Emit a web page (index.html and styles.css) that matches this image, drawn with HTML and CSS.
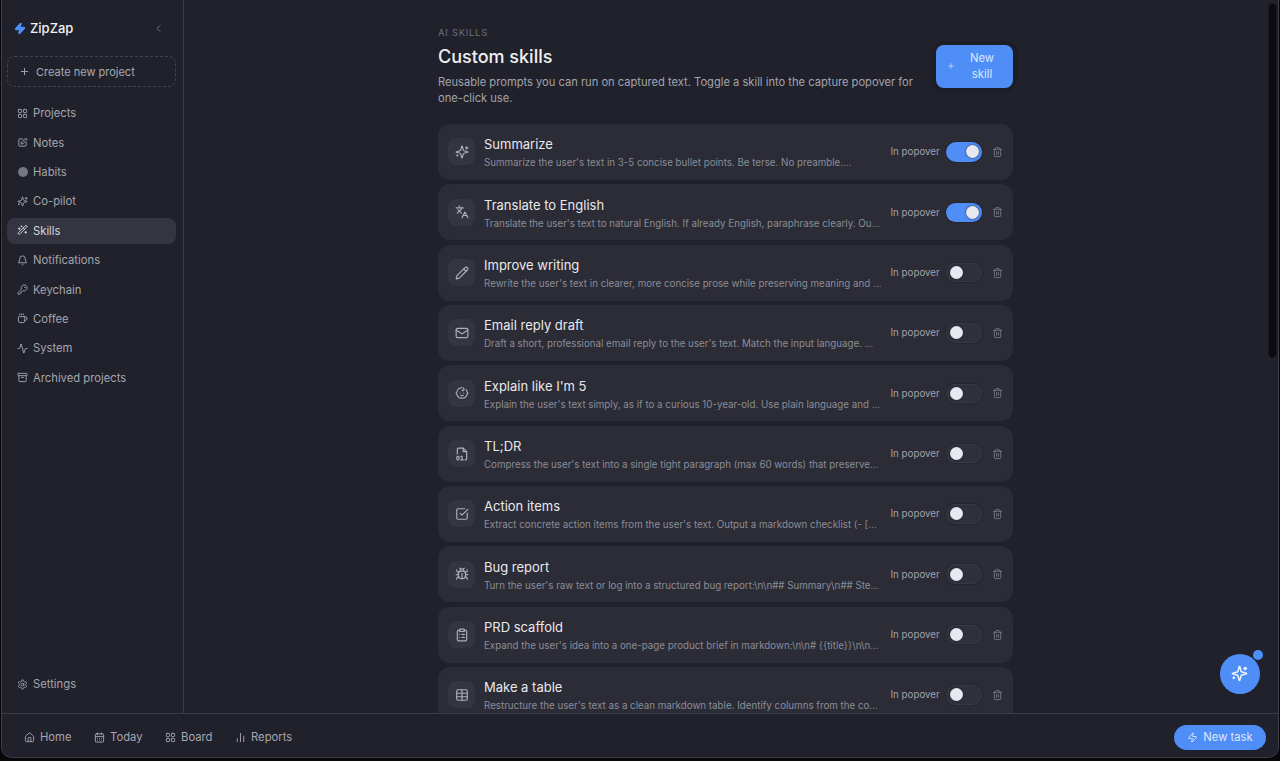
FILE: index.html
```html
<!DOCTYPE html>
<html lang="en">
<head>
  <meta charset="UTF-8" />
  <meta name="viewport" content="width=device-width, initial-scale=1.0" />
  <title>ZipZap - Skills</title>
  <link rel="stylesheet" href="styles.css">
</head>
<body>
  <svg class="sprite" width="0" height="0">
    <defs>
      <symbol id="i-grid" viewBox="0 0 24 24"><rect x="3" y="3" width="7" height="7" rx="1.5"/><rect x="14" y="3" width="7" height="7" rx="1.5"/><rect x="3" y="14" width="7" height="7" rx="1.5"/><rect x="14" y="14" width="7" height="7" rx="1.5"/></symbol>
      <symbol id="i-notes" viewBox="0 0 24 24"><path d="M12 4H6a2 2 0 0 0-2 2v12a2 2 0 0 0 2 2h12a2 2 0 0 0 2-2v-6"/><path d="M18.4 3.6a2 2 0 0 1 2.8 2.8L13 14.5l-4 1 1-4z"/></symbol>
      <symbol id="i-sparkles" viewBox="0 0 24 24"><path d="M9.9 15.5a2 2 0 0 0-1.4-1.4l-6.1-1.6a.5.5 0 0 1 0-1l6.1-1.6a2 2 0 0 0 1.4-1.4l1.6-6.1a.5.5 0 0 1 1 0l1.6 6.1a2 2 0 0 0 1.4 1.4l6.1 1.6a.5.5 0 0 1 0 1l-6.1 1.6a2 2 0 0 0-1.4 1.4l-1.6 6.1a.5.5 0 0 1-1 0z"/><path d="M20 3v4"/><path d="M22 5h-4"/><path d="M4 17v2"/><path d="M5 18H3"/></symbol>
      <symbol id="i-wand" viewBox="0 0 24 24"><path d="m21.6 2.4-1.2-1.2a1.2 1.2 0 0 0-1.7 0L2.4 17.4a1.2 1.2 0 0 0 0 1.7l1.2 1.2a1.2 1.2 0 0 0 1.7 0L21.6 4.1a1.2 1.2 0 0 0 0-1.7"/><path d="m14 7 3 3"/><path d="M5 6v4"/><path d="M19 14v4"/><path d="M10 2v2"/><path d="M7 8H3"/><path d="M21 16h-4"/><path d="M11 3H9"/></symbol>
      <symbol id="i-bell" viewBox="0 0 24 24"><path d="M10.3 21a2 2 0 0 0 3.4 0"/><path d="M3.3 15.3A1 1 0 0 0 4 17h16a1 1 0 0 0 .7-1.7C19.4 14 18 12.6 18 8A6 6 0 0 0 6 8c0 4.6-1.4 6-2.7 7.3"/></symbol>
      <symbol id="i-key" viewBox="0 0 24 24"><path d="M2.6 18.4A2 2 0 0 0 2 19.8V21a1 1 0 0 0 1 1h3a1 1 0 0 0 1-1v-1a1 1 0 0 1 1-1h1a1 1 0 0 0 1-1v-1a1 1 0 0 1 1-1h.2a2 2 0 0 0 1.4-.6l.8-.8a6.5 6.5 0 1 0-4-4z"/><circle cx="16.5" cy="7.5" r=".5"/></symbol>
      <symbol id="i-coffee" viewBox="0 0 24 24"><path d="M10 2v2"/><path d="M14 2v2"/><path d="M6 2v2"/><path d="M16 8a1 1 0 0 1 1 1v8a4 4 0 0 1-4 4H7a4 4 0 0 1-4-4V9a1 1 0 0 1 1-1h14a4 4 0 1 1 0 8h-1"/></symbol>
      <symbol id="i-activity" viewBox="0 0 24 24"><path d="M22 12h-2.5a2 2 0 0 0-1.9 1.5l-2.4 8.3a.25.25 0 0 1-.5 0L9.2 2.2a.25.25 0 0 0-.5 0l-2.3 8.3A2 2 0 0 1 4.5 12H2"/></symbol>
      <symbol id="i-archive" viewBox="0 0 24 24"><rect x="2" y="3" width="20" height="5" rx="1"/><path d="M4 8v11a2 2 0 0 0 2 2h12a2 2 0 0 0 2-2V8"/><path d="M10 12h4"/></symbol>
      <symbol id="i-gear" viewBox="0 0 24 24"><path d="M12.2 2h-.4a2 2 0 0 0-2 2v.2a2 2 0 0 1-1 1.7l-.4.3a2 2 0 0 1-2 0l-.2-.1a2 2 0 0 0-2.7.7l-.2.4a2 2 0 0 0 .7 2.7l.2.1a2 2 0 0 1 1 1.7v.5a2 2 0 0 1-1 1.8l-.2.1a2 2 0 0 0-.7 2.7l.2.4a2 2 0 0 0 2.7.7l.2-.1a2 2 0 0 1 2 0l.4.3a2 2 0 0 1 1 1.7v.2a2 2 0 0 0 2 2h.4a2 2 0 0 0 2-2v-.2a2 2 0 0 1 1-1.7l.4-.3a2 2 0 0 1 2 0l.2.1a2 2 0 0 0 2.7-.7l.2-.4a2 2 0 0 0-.7-2.7l-.2-.1a2 2 0 0 1-1-1.8v-.5a2 2 0 0 1 1-1.7l.2-.1a2 2 0 0 0 .7-2.7l-.2-.4a2 2 0 0 0-2.7-.7l-.2.1a2 2 0 0 1-2 0l-.4-.3a2 2 0 0 1-1-1.7V4a2 2 0 0 0-2-2"/><circle cx="12" cy="12" r="3"/></symbol>
      <symbol id="i-plus" viewBox="0 0 24 24"><path d="M5 12h14"/><path d="M12 5v14"/></symbol>
      <symbol id="i-chevron" viewBox="0 0 24 24"><path d="m15 18-6-6 6-6"/></symbol>
      <symbol id="i-trash" viewBox="0 0 24 24"><path d="M19 6v14a2 2 0 0 1-2 2H7a2 2 0 0 1-2-2V6"/><path d="M3 6h18"/><path d="M8 6V4a2 2 0 0 1 2-2h4a2 2 0 0 1 2 2v2"/><path d="M10 11v6"/><path d="M14 11v6"/></symbol>
      <symbol id="i-languages" viewBox="0 0 24 24"><path d="m5 8 6 6"/><path d="m4 14 6-6 2-3"/><path d="M2 5h12"/><path d="M7 2h1"/><path d="m22 22-5-10-5 10"/><path d="M14 18h6"/></symbol>
      <symbol id="i-pencil" viewBox="0 0 24 24"><path d="M21.2 6.8a2.8 2.8 0 0 0-4-4L3.8 16.2a2 2 0 0 0-.5.8l-1.3 4.4a.5.5 0 0 0 .6.6l4.4-1.3a2 2 0 0 0 .8-.5z"/><path d="m15 5 4 4"/></symbol>
      <symbol id="i-mail" viewBox="0 0 24 24"><rect x="2" y="4" width="20" height="16" rx="2"/><path d="m22 7-8.97 5.7a1.94 1.94 0 0 1-2.06 0L2 7"/></symbol>
      <symbol id="i-baby" viewBox="0 0 24 24"><path d="M9 12h.01"/><path d="M15 12h.01"/><path d="M10 16c.5.3 1.2.5 2 .5s1.5-.2 2-.5"/><path d="M19 6.3a9 9 0 0 1 1.8 3.9 2 2 0 0 1 0 3.6 9 9 0 0 1-17.6 0 2 2 0 0 1 0-3.6A9 9 0 0 1 12 3c2 0 3.5 1.1 3.5 2.5s-.9 2.5-2 2.5c-.8 0-1.5-.4-1.5-1"/></symbol>
      <symbol id="i-file" viewBox="0 0 24 24"><path d="M4 12V4a2 2 0 0 1 2-2h8l6 6v12a2 2 0 0 1-2 2h-1"/><path d="M14 2v6h6"/><path d="M10 16h2v6"/><path d="M10 22h4"/><rect x="3" y="16" width="4" height="6" rx="2"/></symbol>
      <symbol id="i-check" viewBox="0 0 24 24"><path d="M21 10.5V19a2 2 0 0 1-2 2H5a2 2 0 0 1-2-2V5a2 2 0 0 1 2-2h12"/><path d="m9 11 3 3L22 4"/></symbol>
      <symbol id="i-bug" viewBox="0 0 24 24"><path d="M12 20v-9"/><path d="M14 7a4 4 0 0 1 4 4v3a6 6 0 0 1-12 0v-3a4 4 0 0 1 4-4z"/><path d="M14.1 3.9 16 2"/><path d="M9.9 3.9 8 2"/><path d="M9 7V6a3 3 0 0 1 6 0v1"/><path d="M21 21a4 4 0 0 0-3.8-4"/><path d="M21 5a4 4 0 0 1-3.6 4"/><path d="M22 13h-4"/><path d="M3 21a4 4 0 0 1 3.8-4"/><path d="M3 5a4 4 0 0 0 3.6 4"/><path d="M6 13H2"/></symbol>
      <symbol id="i-clipboard" viewBox="0 0 24 24"><rect x="8" y="2" width="8" height="4" rx="1"/><path d="M16 4h2a2 2 0 0 1 2 2v14a2 2 0 0 1-2 2H6a2 2 0 0 1-2-2V6a2 2 0 0 1 2-2h2"/><path d="M12 11h4"/><path d="M12 16h4"/><path d="M8 11h.01"/><path d="M8 16h.01"/></symbol>
      <symbol id="i-table" viewBox="0 0 24 24"><rect x="3" y="3" width="18" height="18" rx="2"/><path d="M12 3v18"/><path d="M3 9h18"/><path d="M3 15h18"/></symbol>
      <symbol id="i-home" viewBox="0 0 24 24"><path d="M15 21v-8a1 1 0 0 0-1-1h-4a1 1 0 0 0-1 1v8"/><path d="M3 10a2 2 0 0 1 .7-1.5l7-6a2 2 0 0 1 2.6 0l7 6A2 2 0 0 1 21 10v9a2 2 0 0 1-2 2H5a2 2 0 0 1-2-2z"/></symbol>
      <symbol id="i-calendar" viewBox="0 0 24 24"><path d="M8 2v4"/><path d="M16 2v4"/><rect x="3" y="4" width="18" height="18" rx="2"/><path d="M3 10h18"/><path d="M8 14h.01"/><path d="M12 14h.01"/><path d="M16 14h.01"/><path d="M8 18h.01"/><path d="M12 18h.01"/><path d="M16 18h.01"/></symbol>
      <symbol id="i-chart" viewBox="0 0 24 24"><path d="M5 21v-6"/><path d="M12 21V3"/><path d="M19 21V9"/></symbol>
      <symbol id="i-zap" viewBox="0 0 24 24"><path d="M4 14a1 1 0 0 1-.8-1.6l9.9-10.2a.5.5 0 0 1 .9.5l-1.9 6A1 1 0 0 0 13 10h7a1 1 0 0 1 .8 1.6l-9.9 10.2a.5.5 0 0 1-.9-.5l1.9-6A1 1 0 0 0 11 14z"/></symbol>
    </defs>
  </svg>

  <div class="window">
    <div class="top">
      <aside class="sidebar">
        <div class="brand">
          <svg class="brand-bolt" viewBox="0 0 24 24"><use href="#i-zap"/></svg>
          <span class="brand-name">ZipZap</span>
          <svg class="icon collapse"><use href="#i-chevron"/></svg>
        </div>
        <button class="create"><svg class="icon"><use href="#i-plus"/></svg>Create new project</button>
        <nav class="nav">
          <a class="nav-item"><svg class="icon"><use href="#i-grid"/></svg>Projects</a>
          <a class="nav-item"><svg class="icon"><use href="#i-notes"/></svg>Notes</a>
          <a class="nav-item"><span class="dot"></span>Habits</a>
          <a class="nav-item"><svg class="icon"><use href="#i-sparkles"/></svg>Co-pilot</a>
          <a class="nav-item active"><svg class="icon"><use href="#i-wand"/></svg>Skills</a>
          <a class="nav-item"><svg class="icon"><use href="#i-bell"/></svg>Notifications</a>
          <a class="nav-item"><svg class="icon"><use href="#i-key"/></svg>Keychain</a>
          <a class="nav-item"><svg class="icon"><use href="#i-coffee"/></svg>Coffee</a>
          <a class="nav-item"><svg class="icon"><use href="#i-activity"/></svg>System</a>
          <a class="nav-item"><svg class="icon"><use href="#i-archive"/></svg>Archived projects</a>
        </nav>
        <a class="nav-item settings"><svg class="icon"><use href="#i-gear"/></svg>Settings</a>
      </aside>

      <main class="main">
        <div class="content">
          <header class="head">
            <div class="head-text">
              <div class="eyebrow">AI SKILLS</div>
              <h1>Custom skills</h1>
              <p>Reusable prompts you can run on captured text. Toggle a skill into the capture popover for one-click use.</p>
            </div>
            <button class="new-skill"><svg class="icon"><use href="#i-plus"/></svg><span>New skill</span></button>
          </header>

          <div class="skills">
            <div class="skill">
              <div class="skill-icon"><svg class="icon"><use href="#i-sparkles"/></svg></div>
              <div class="skill-body"><div class="skill-name">Summarize</div><div class="skill-desc">Summarize the user's text in 3-5 concise bullet points. Be terse. No preamble.&hellip;</div></div>
              <span class="pop-label">In popover</span>
              <span class="toggle on"></span>
              <svg class="icon trash"><use href="#i-trash"/></svg>
            </div>
            <div class="skill">
              <div class="skill-icon"><svg class="icon"><use href="#i-languages"/></svg></div>
              <div class="skill-body"><div class="skill-name">Translate to English</div><div class="skill-desc">Translate the user's text to natural English. If already English, paraphrase clearly. Ou&hellip;</div></div>
              <span class="pop-label">In popover</span>
              <span class="toggle on"></span>
              <svg class="icon trash"><use href="#i-trash"/></svg>
            </div>
            <div class="skill">
              <div class="skill-icon"><svg class="icon"><use href="#i-pencil"/></svg></div>
              <div class="skill-body"><div class="skill-name">Improve writing</div><div class="skill-desc">Rewrite the user's text in clearer, more concise prose while preserving meaning and &hellip;</div></div>
              <span class="pop-label">In popover</span>
              <span class="toggle"></span>
              <svg class="icon trash"><use href="#i-trash"/></svg>
            </div>
            <div class="skill">
              <div class="skill-icon"><svg class="icon"><use href="#i-mail"/></svg></div>
              <div class="skill-body"><div class="skill-name">Email reply draft</div><div class="skill-desc">Draft a short, professional email reply to the user's text. Match the input language. &hellip;</div></div>
              <span class="pop-label">In popover</span>
              <span class="toggle"></span>
              <svg class="icon trash"><use href="#i-trash"/></svg>
            </div>
            <div class="skill">
              <div class="skill-icon"><svg class="icon"><use href="#i-baby"/></svg></div>
              <div class="skill-body"><div class="skill-name">Explain like I'm 5</div><div class="skill-desc">Explain the user's text simply, as if to a curious 10-year-old. Use plain language and &hellip;</div></div>
              <span class="pop-label">In popover</span>
              <span class="toggle"></span>
              <svg class="icon trash"><use href="#i-trash"/></svg>
            </div>
            <div class="skill">
              <div class="skill-icon"><svg class="icon"><use href="#i-file"/></svg></div>
              <div class="skill-body"><div class="skill-name">TL;DR</div><div class="skill-desc">Compress the user's text into a single tight paragraph (max 60 words) that preserve&hellip;</div></div>
              <span class="pop-label">In popover</span>
              <span class="toggle"></span>
              <svg class="icon trash"><use href="#i-trash"/></svg>
            </div>
            <div class="skill">
              <div class="skill-icon"><svg class="icon"><use href="#i-check"/></svg></div>
              <div class="skill-body"><div class="skill-name">Action items</div><div class="skill-desc">Extract concrete action items from the user's text. Output a markdown checklist (- [&hellip;</div></div>
              <span class="pop-label">In popover</span>
              <span class="toggle"></span>
              <svg class="icon trash"><use href="#i-trash"/></svg>
            </div>
            <div class="skill">
              <div class="skill-icon"><svg class="icon"><use href="#i-bug"/></svg></div>
              <div class="skill-body"><div class="skill-name">Bug report</div><div class="skill-desc">Turn the user's raw text or log into a structured bug report:\n\n## Summary\n## Ste&hellip;</div></div>
              <span class="pop-label">In popover</span>
              <span class="toggle"></span>
              <svg class="icon trash"><use href="#i-trash"/></svg>
            </div>
            <div class="skill">
              <div class="skill-icon"><svg class="icon"><use href="#i-clipboard"/></svg></div>
              <div class="skill-body"><div class="skill-name">PRD scaffold</div><div class="skill-desc">Expand the user's idea into a one-page product brief in markdown:\n\n# {{title}}\n\n&hellip;</div></div>
              <span class="pop-label">In popover</span>
              <span class="toggle"></span>
              <svg class="icon trash"><use href="#i-trash"/></svg>
            </div>
            <div class="skill">
              <div class="skill-icon"><svg class="icon"><use href="#i-table"/></svg></div>
              <div class="skill-body"><div class="skill-name">Make a table</div><div class="skill-desc">Restructure the user's text as a clean markdown table. Identify columns from the co&hellip;</div></div>
              <span class="pop-label">In popover</span>
              <span class="toggle"></span>
              <svg class="icon trash"><use href="#i-trash"/></svg>
            </div>
          </div>
        </div>
        <div class="scroll-thumb"></div>
      </main>
    </div>

    <footer class="bottom">
      <a class="tab"><svg class="icon"><use href="#i-home"/></svg>Home</a>
      <a class="tab"><svg class="icon"><use href="#i-calendar"/></svg>Today</a>
      <a class="tab"><svg class="icon"><use href="#i-grid"/></svg>Board</a>
      <a class="tab"><svg class="icon"><use href="#i-chart"/></svg>Reports</a>
      <button class="new-task"><svg class="icon"><use href="#i-zap"/></svg>New task</button>
    </footer>

    <button class="fab"><svg class="icon"><use href="#i-sparkles"/></svg><span class="fab-dot"></span></button>
  </div>
</body>
</html>
```

FILE: styles.css
```css
* {
  margin: 0;
  padding: 0;
  box-sizing: border-box;
}

html, body {
  height: 100%;
  overflow: hidden;
}

body {
  background: #08080b;
  font-family: Inter, 'Noto Sans', sans-serif;
  color: #b4b5bd;
}

.sprite {
  position: absolute;
}

.icon {
  width: 11px;
  height: 11px;
  flex: none;
  fill: none;
  stroke: currentColor;
  stroke-width: 2;
  stroke-linecap: round;
  stroke-linejoin: round;
}

button {
  font-family: inherit;
  border: 0;
}

.window {
  position: relative;
  height: 758px;
  margin: 0 1px;
  display: flex;
  flex-direction: column;
  background: #20212b;
  border: 1px solid #3b3c46;
  border-top: 0;
  border-radius: 0 0 11px 11px;
  overflow: hidden;
}

.top {
  flex: 1;
  min-height: 0;
  display: flex;
}

/* sidebar */
.sidebar {
  width: 182px;
  flex: none;
  display: flex;
  flex-direction: column;
  padding: 0 6px 16px 5px;
  border-right: 1px solid #3b3c46;
}

.brand {
  height: 56px;
  display: flex;
  align-items: center;
  padding: 0 13px 0 7px;
  gap: 4px;
}

.brand-bolt {
  width: 12px;
  height: 13px;
  flex: none;
  fill: #4f8ef7;
  stroke: #4f8ef7;
  stroke-width: 3;
  stroke-linejoin: round;
}

.brand-name {
  font-size: 13px;
  font-weight: 500;
  color: #f1f1f4;
}

.collapse {
  margin-left: auto;
  color: #7d7e88;
}

.create {
  height: 31px;
  width: 169px;
  display: flex;
  align-items: center;
  gap: 6px;
  padding: 0 11px;
  background: transparent;
  border: 1px dashed #41424d;
  border-radius: 8px;
  color: #a9aab2;
  font-size: 11px;
}

.nav {
  display: flex;
  flex-direction: column;
  gap: 3.9px;
  margin-top: 13.5px;
  flex: 1;
}

.nav-item {
  width: 169px;
  height: 25.5px;
  display: flex;
  align-items: center;
  gap: 5px;
  padding: 0 10px;
  border-radius: 8px;
  font-size: 11.25px;
  color: #a5a6af;
}

.nav-item.active {
  background: #343540;
  color: #d6d7dd;
}

.dot {
  width: 10px;
  height: 10px;
  margin: 0 .5px;
  flex: none;
  border-radius: 50%;
  background: #75767f;
}

/* main column */
.main {
  position: relative;
  flex: 1;
  min-width: 0;
  overflow: hidden;
  padding: 26px 11px 0 0;
}

.scroll-thumb {
  position: absolute;
  top: 3px;
  right: 1px;
  width: 9.5px;
  height: 355px;
  background: #0b0b10;
  border: 1px solid #17171e;
  border-radius: 5px;
}

.content {
  width: 575px;
  margin: 0 auto;
}

.head {
  display: flex;
  align-items: flex-start;
  justify-content: space-between;
  gap: 20px;
  height: 98px;
}

.head-text {
  flex: 1;
}

.eyebrow {
  font-size: 9.5px;
  letter-spacing: .7px;
  line-height: 14px;
  color: #6f707a;
}

h1 {
  font-size: 18px;
  font-weight: 500;
  line-height: 24px;
  margin-top: 5px;
  color: #f1f1f4;
}

.head-text p {
  font-size: 11.15px;
  line-height: 16px;
  margin-top: 5px;
  color: #a3a4ad;
}

.new-skill {
  width: 77px;
  height: 42.5px;
  margin-top: 19px;
  flex: none;
  display: flex;
  align-items: center;
  gap: 8px;
  padding: 0 12px 0 11px;
  background: #4f8ef7;
  border-radius: 8px;
  color: #dbe8fd;
  font-size: 11.25px;
  line-height: 16px;
  box-shadow: 0 0 0 4px #1c1d26;
}

.new-skill .icon {
  width: 8px;
  height: 8px;
}

.new-skill span {
  flex: 1;
  text-align: center;
}

.skills {
  display: flex;
  flex-direction: column;
  gap: 4.45px;
}

.skill {
  height: 55.9px;
  flex: none;
  display: flex;
  align-items: center;
  padding: 0 10px;
  background: #2b2c36;
  border-radius: 12px;
}

.skill-icon {
  width: 27px;
  height: 27px;
  flex: none;
  display: flex;
  align-items: center;
  justify-content: center;
  margin-right: 9px;
  border-radius: 8px;
  background: #343540;
  color: #aeafb8;
}

.skill-icon .icon {
  width: 14px;
  height: 14px;
}

.skill-body {
  width: 396px;
  margin-top: 3px;
  flex: none;
  min-width: 0;
}

.skill-name {
  font-size: 13px;
  font-weight: 400;
  line-height: 17px;
  color: #e9e9ed;
}

.skill-desc {
  font-size: 9.75px;
  line-height: 14px;
  margin-top: 3px;
  color: #8b8c96;
  white-space: nowrap;
}

.pop-label {
  width: 49px;
  margin-left: 10.5px;
  font-size: 9.75px;
  color: #a0a1aa;
  white-space: nowrap;
}

.toggle {
  position: relative;
  width: 36px;
  height: 19.5px;
  flex: none;
  margin-left: 6.5px;
  border-radius: 10px;
  background: #2f303a;
  box-shadow: 0 0 0 1px #25262f, inset 0 0 0 1px #383944;
}

.toggle::after {
  content: "";
  position: absolute;
  left: 4px;
  top: 3.25px;
  width: 13px;
  height: 13px;
  border-radius: 50%;
  background: #e7e8f0;
  box-shadow: 0 0 2px #1c1d26;
}

.toggle.on {
  background: #4f8ef7;
  box-shadow: 0 0 0 1px #25262f;
}

.toggle.on::after {
  left: 20px;
}

.trash {
  margin-left: 10px;
  width: 11px;
  height: 12px;
  color: #787983;
}

/* bottom bar */
.bottom {
  height: 44px;
  flex: none;
  display: flex;
  align-items: center;
  padding: 3px 12px 0 22px;
  gap: 22.5px;
  background: #20212b;
  border-top: 1px solid #3b3c46;
}

.tab {
  display: flex;
  align-items: center;
  gap: 5px;
  font-size: 11.25px;
  color: #a5a6af;
}

.new-task {
  margin-left: auto;
  height: 25px;
  width: 92px;
  display: flex;
  align-items: center;
  justify-content: center;
  gap: 5px;
  background: #4f8ef7;
  border-radius: 13px;
  color: #dbe8fd;
  font-size: 11.25px;
}

.fab {
  position: absolute;
  right: 18.5px;
  bottom: 63.5px;
  width: 40px;
  height: 40px;
  display: flex;
  align-items: center;
  justify-content: center;
  border-radius: 50%;
  background: #4f8ef7;
  color: #f0f5ff;
}

.fab .icon {
  width: 17px;
  height: 17px;
}

.fab-dot {
  position: absolute;
  top: -4px;
  right: -3px;
  width: 10px;
  height: 10px;
  border-radius: 50%;
  background: #4f8ef7;
}
```
